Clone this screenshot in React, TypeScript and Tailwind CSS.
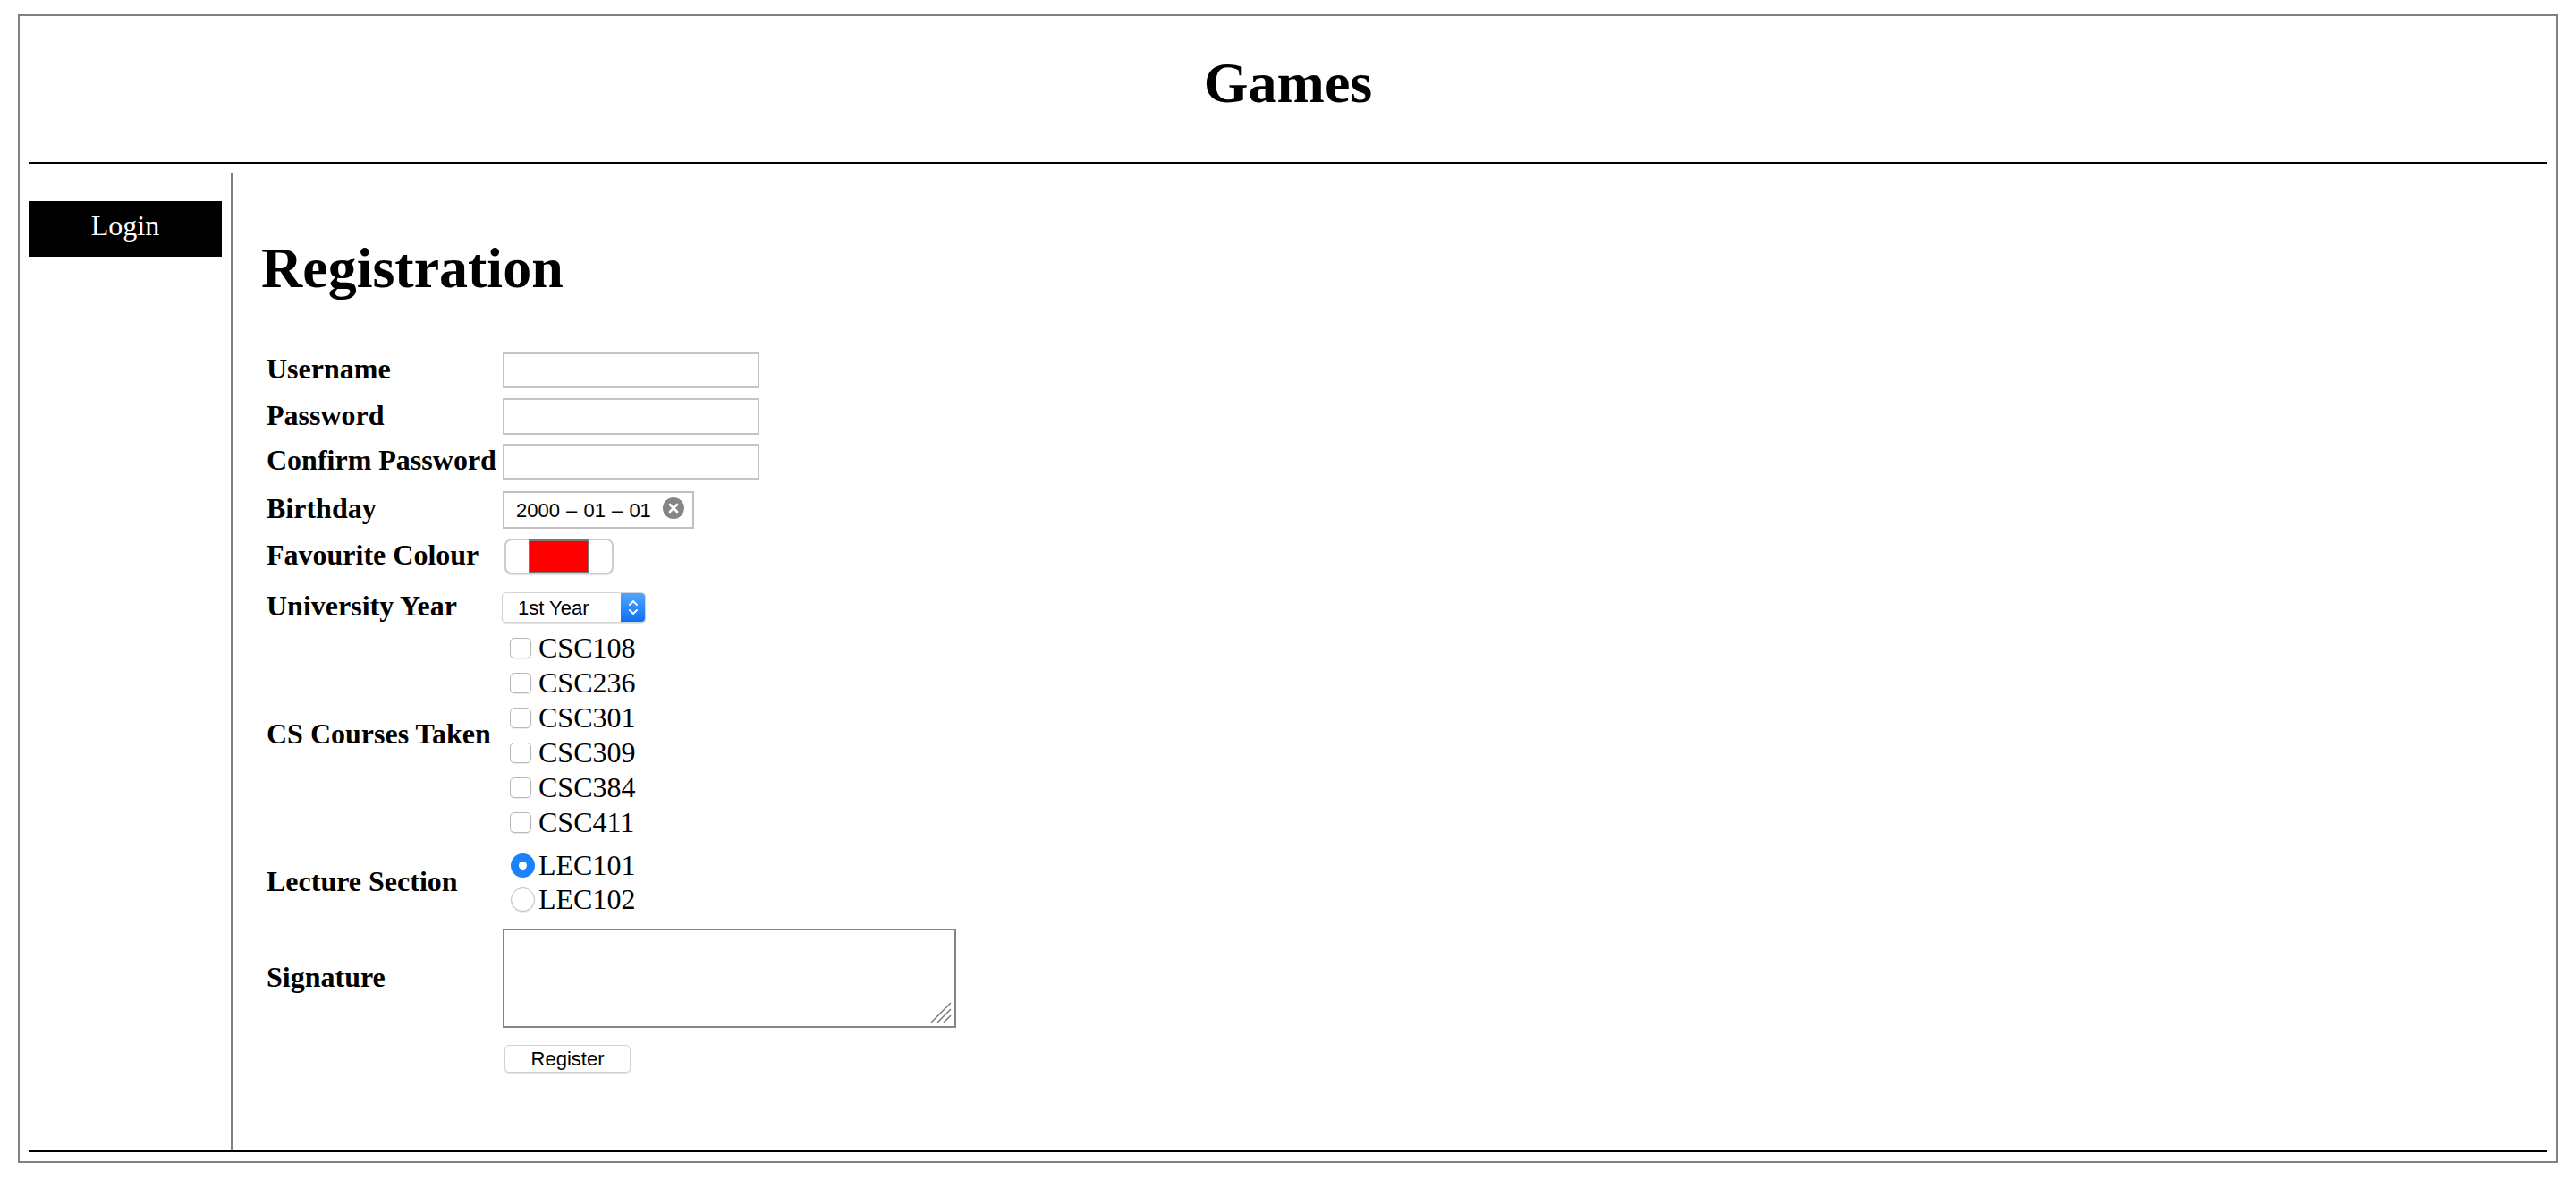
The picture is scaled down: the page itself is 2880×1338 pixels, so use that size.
import React from "react";

function Label({ children }: { children: React.ReactNode }) {
  return (
    <div className="w-[264px] shrink-0 font-bold text-[32px] leading-[37px] pb-[3px] whitespace-nowrap">
      {children}
    </div>
  );
}

function Checkbox({ label }: { label: string }) {
  return (
    <div className="h-[39px] flex items-center">
      <div className="ml-[8px] w-[24px] h-[23px] rounded-[5px] border-[1.5px] border-[#b8b8b8] bg-white shadow-[0_1px_1px_rgba(0,0,0,0.08)]" />
      <span className="ml-[8px] text-[32px] leading-[37px]">{label}</span>
    </div>
  );
}

function Radio({ label, checked }: { label: string; checked?: boolean }) {
  return (
    <div className="h-[38.5px] flex items-center">
      {checked ? (
        <div className="ml-[9px] w-[27px] h-[27px] rounded-full bg-[#1b82fb] flex items-center justify-center">
          <div className="w-[9px] h-[9px] rounded-full bg-white" />
        </div>
      ) : (
        <div className="ml-[9px] w-[27px] h-[27px] rounded-full border-[1.5px] border-[#bdbdbd] bg-white shadow-[0_1px_1px_rgba(0,0,0,0.1)]" />
      )}
      <span className="ml-[4px] text-[32px] leading-[37px]">{label}</span>
    </div>
  );
}

export default function App() {
  return (
    <div className="pt-[16px] px-[20px] pb-[38px] bg-white font-['Liberation_Serif','Times_New_Roman',serif] text-black">
      <div className="border-2 border-[#808080] px-[10px] pb-[10px]">
        <header className="h-[165px] border-b-2 border-black pt-[43px]">
          <h1 className="text-center text-[64px] leading-[64px] font-bold">Games</h1>
        </header>
        <div className="mt-[10px] h-[1093px] flex">
          <nav className="w-[228px] shrink-0 border-r-2 border-[#808080] pt-[32px]">
            <div className="w-[216px] h-[62px] bg-black text-white text-[32px] leading-[32px] pt-[11px] text-center">
              Login
            </div>
          </nav>
          <main className="flex-1 pl-[32px]">
            <h2 className="mt-[75px] text-[64px] leading-[64px] font-bold">Registration</h2>
            <div className="mt-[62px] pl-[6px] flex flex-col">
              <div className="h-[40px] flex items-center">
                <Label>Username</Label>
                <div className="w-[287px] h-[40px] border-2 border-[#c4c4c4] bg-white" />
              </div>
              <div className="mt-[11px] h-[41px] flex items-center">
                <Label>Password</Label>
                <div className="w-[287px] h-[41px] border-2 border-[#c4c4c4] bg-white" />
              </div>
              <div className="mt-[10px] h-[40px] flex items-center">
                <Label>Confirm Password</Label>
                <div className="w-[287px] h-[40px] border-2 border-[#c4c4c4] bg-white" />
              </div>
              <div className="mt-[13px] h-[42px] flex items-center">
                <Label>Birthday</Label>
                <div className="w-[214px] h-[42px] border-2 border-[#c0c0c0] bg-white flex items-center pl-[13px] font-['Liberation_Sans',Arial,sans-serif] text-[22px] leading-[25px]">
                  <span>2000</span>
                  <span className="mx-[1px]">&nbsp;–&nbsp;</span>
                  <span>01</span>
                  <span className="mx-[1px]">&nbsp;–&nbsp;</span>
                  <span>01</span>
                  <div className="ml-auto mr-[9px] -mt-[4px] w-[24px] h-[24px] rounded-full bg-[#858585] flex items-center justify-center">
                    <svg width="12" height="12" viewBox="0 0 12 12">
                      <path d="M2 2 L10 10 M10 2 L2 10" stroke="white" strokeWidth="2.6" strokeLinecap="round" />
                    </svg>
                  </div>
                </div>
              </div>
              <div className="mt-[11px] h-[40px] flex items-center">
                <Label>Favourite Colour</Label>
                <div className="ml-[2px] w-[122px] h-[40px] rounded-[8px] border-2 border-[#cdcdcd] bg-white shadow-[0_1px_1px_rgba(0,0,0,0.12)] flex items-center justify-center">
                  <div className="w-[68px] h-[38px] border-2 border-[#777777] bg-[#ff0000]" />
                </div>
              </div>
              <div className="mt-[20px] h-[34px] flex items-center">
                <Label>University Year</Label>
                <div className="-ml-[1px] w-[161px] h-[34px] rounded-[5px] border border-[#d4d4d4] bg-white shadow-[0_1px_1px_rgba(0,0,0,0.12)] flex overflow-hidden">
                  <div className="flex-1 pl-[17px] flex items-center font-['Liberation_Sans',Arial,sans-serif] text-[22px] leading-[25px]">
                    1st Year
                  </div>
                  <div className="w-[27px] h-full bg-gradient-to-b from-[#4ea5ff] to-[#0a6ef6] flex items-center justify-center">
                    <svg width="14" height="24" viewBox="0 0 14 24">
                      <path d="M3 9 L7 5 L11 9" stroke="white" strokeWidth="2" fill="none" strokeLinecap="round" strokeLinejoin="round" />
                      <path d="M3 15 L7 19 L11 15" stroke="white" strokeWidth="2" fill="none" strokeLinecap="round" strokeLinejoin="round" />
                    </svg>
                  </div>
                </div>
              </div>
              <div className="mt-[9px] h-[234px] flex items-center">
                <Label>CS Courses Taken</Label>
                <div className="flex flex-col">
                  <Checkbox label="CSC108" />
                  <Checkbox label="CSC236" />
                  <Checkbox label="CSC301" />
                  <Checkbox label="CSC309" />
                  <Checkbox label="CSC384" />
                  <Checkbox label="CSC411" />
                </div>
              </div>
              <div className="mt-[9px] h-[77px] flex items-center">
                <Label>Lecture Section</Label>
                <div className="flex flex-col">
                  <Radio label="LEC101" checked />
                  <Radio label="LEC102" />
                </div>
              </div>
              <div className="mt-[13px] h-[111px] flex items-center">
                <Label>Signature</Label>
                <div className="w-[507px] h-[111px] border-2 border-[#858585] bg-white flex items-end justify-end">
                  <svg width="26" height="26" viewBox="0 0 26 26" className="mb-[2px] mr-[2px]">
                    <path d="M2 24 L24 2 M9 24 L24 9 M16 24 L24 16" stroke="#7a7a7a" strokeWidth="1.5" />
                  </svg>
                </div>
              </div>
              <div className="mt-[19px] h-[31px] flex items-center">
                <div className="w-[264px] shrink-0" />
                <div className="ml-[2px] w-[141px] h-[31px] rounded-[5px] border border-[#d2d2d2] bg-white shadow-[0_1px_1px_rgba(0,0,0,0.12)] flex items-center justify-center font-['Liberation_Sans',Arial,sans-serif] text-[22px] leading-[25px]">
                  Register
                </div>
              </div>
            </div>
          </main>
        </div>
        <footer className="border-t-2 border-black" />
      </div>
    </div>
  );
}
